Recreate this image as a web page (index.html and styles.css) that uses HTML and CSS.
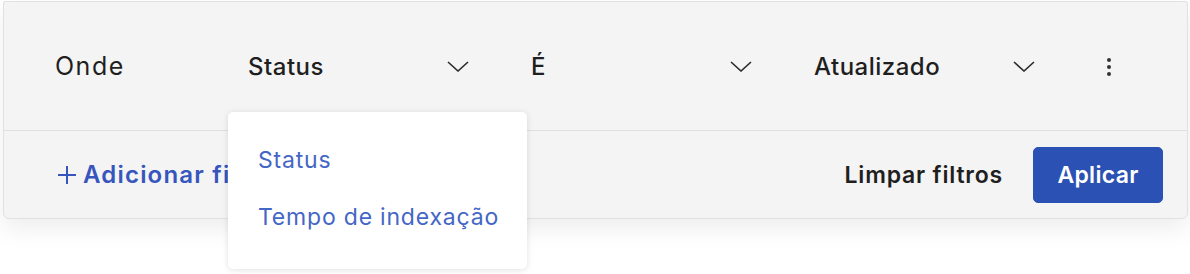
FILE: index.html
```html
<!DOCTYPE html>
<html lang="pt">
<head>
<meta charset="utf-8">
<link rel="stylesheet" href="styles.css">
</head>
<body>
<div class="stage">
  <div class="panel">
    <div class="row-top">
      <div class="where">Onde</div>
      <div class="select"><span class="sel-text">Status</span><svg class="chev" viewBox="0 0 22 11" width="22" height="11"><path d="M1 1 L11 10 L21 1" fill="none" stroke="#2b2b2b" stroke-width="1.6"/></svg></div>
      <div class="select"><span class="sel-text">É</span><svg class="chev" viewBox="0 0 22 11" width="22" height="11"><path d="M1 1 L11 10 L21 1" fill="none" stroke="#2b2b2b" stroke-width="1.6"/></svg></div>
      <div class="select"><span class="sel-text">Atualizado</span><svg class="chev" viewBox="0 0 22 11" width="22" height="11"><path d="M1 1 L11 10 L21 1" fill="none" stroke="#2b2b2b" stroke-width="1.6"/></svg></div>
      <div class="kebab"><span></span><span></span><span></span></div>
    </div>
    <div class="row-bottom">
      <div class="add"><svg class="plus" viewBox="0 0 18 18" width="18" height="18"><path d="M9 0 V18 M0 9 H18" stroke="#3656bd" stroke-width="2" fill="none"/></svg><span>Adicionar filtro</span></div>
      <div class="actions">
        <span class="clear">Limpar filtros</span>
        <button class="apply">Aplicar</button>
      </div>
    </div>
  </div>
  <div class="menu">
    <div class="menu-item">Status</div>
    <div class="menu-item">Tempo de indexação</div>
  </div>
</div>
</body>
</html>
```

FILE: styles.css
```css
html, body {
  margin: 0;
  padding: 0;
  background: #ffffff;
}
body {
  font-family: "Inter", "Liberation Sans", sans-serif;
  color: #1f1f1f;
  width: 1190px;
  height: 274px;
  overflow: hidden;
}
.stage {
  position: relative;
  padding: 1px 2px 0 3px;
}
.panel {
  background: #f4f4f4;
  border: 1px solid #e1e1e1;
  border-radius: 2px 2px 6px 6px;
  box-shadow: 0 10px 24px rgba(0, 0, 0, 0.07);
  height: 216px;
  display: flex;
  flex-direction: column;
}
.row-top {
  height: 128px;
  border-bottom: 1px solid #e0e0e0;
  display: flex;
  align-items: center;
  padding-left: 51px;
  font-size: 24px;
}
.where {
  width: 193px;
  font-size: 25px;
  font-weight: 400;
  letter-spacing: 1.5px;
}
.select {
  width: 221px;
  margin-right: 62px;
  display: flex;
  align-items: center;
  justify-content: space-between;
  font-weight: 500;
  letter-spacing: 0.5px;
}
.select:nth-child(4) {
  margin-right: 72px;
}
.chev {
  display: block;
}
.kebab {
  display: flex;
  flex-direction: column;
  gap: 3px;
  padding-top: 2px;
}
.kebab span {
  width: 4px;
  height: 4px;
  border-radius: 50%;
  background: #333;
}
.row-bottom {
  flex: 1;
  display: flex;
  align-items: center;
  justify-content: space-between;
  padding: 0 24px 0 54px;
  font-size: 23px;
}
.add {
  display: flex;
  align-items: center;
  gap: 7px;
  color: #3656bd;
  font-size: 24px;
  font-weight: 600;
  letter-spacing: 1.2px;
}
.plus {
  display: block;
}
.actions {
  display: flex;
  align-items: center;
  gap: 30px;
}
.clear {
  font-weight: 600;
  color: #1f1f1f;
  letter-spacing: 0.8px;
}
.apply {
  font-family: inherit;
  font-size: 23px;
  font-weight: 600;
  letter-spacing: 0.3px;
  color: #ffffff;
  background: #2a51b3;
  border: 1px solid #2a51b3;
  border-radius: 5px;
  width: 130px;
  height: 56px;
  padding: 0;
}
.menu {
  position: absolute;
  left: 228px;
  top: 112px;
  width: 299px;
  height: 157px;
  box-sizing: border-box;
  background: #ffffff;
  border-radius: 5px;
  box-shadow: 0 1px 6px rgba(0, 0, 0, 0.12);
  padding: 20px 0 0 30px;
  font-size: 23px;
  color: #4466c6;
  letter-spacing: 0.8px;
}
.menu-item {
  height: 57px;
  line-height: 57px;
  white-space: nowrap;
}
```
